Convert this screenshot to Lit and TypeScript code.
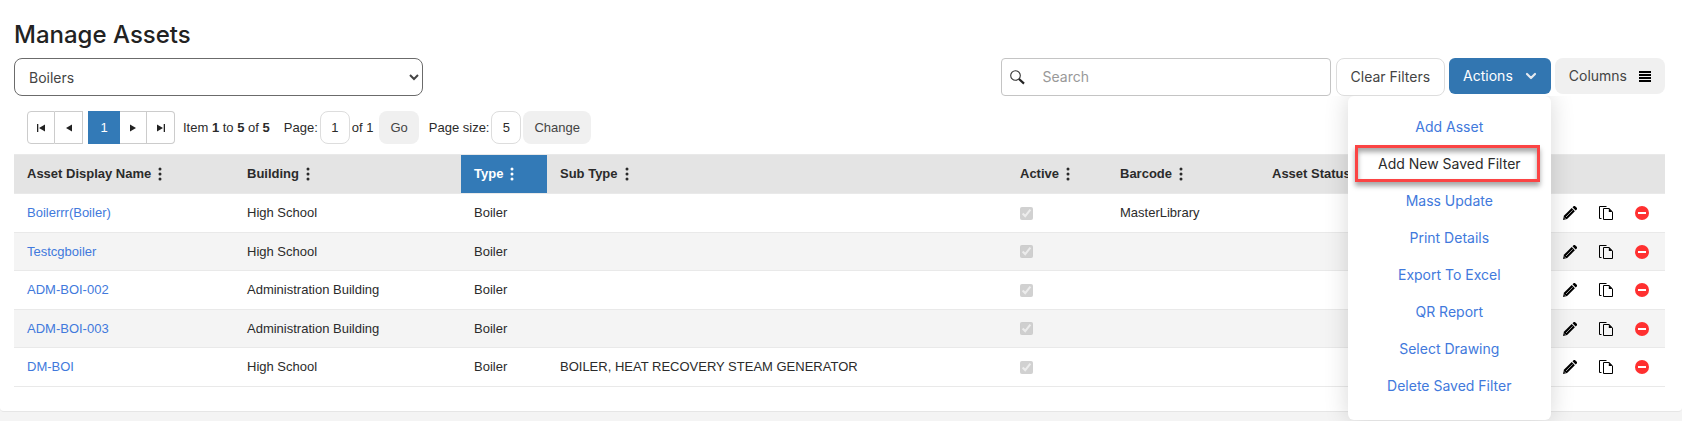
import { LitElement, html, css, svg, nothing } from "lit";
import { customElement, property, state } from "lit/decorators.js";
import { classMap } from "lit/directives/class-map.js";

interface Asset {
  name: string;
  building: string;
  type: string;
  subType?: string;
  active: boolean;
  barcode?: string;
}

const ASSETS: Asset[] = [
  { name: "Boilerrr(Boiler)", building: "High School", type: "Boiler", active: true, barcode: "MasterLibrary" },
  { name: "Testcgboiler", building: "High School", type: "Boiler", active: true },
  { name: "ADM-BOI-002", building: "Administration Building", type: "Boiler", active: true },
  { name: "ADM-BOI-003", building: "Administration Building", type: "Boiler", active: true },
  { name: "DM-BOI", building: "High School", type: "Boiler", subType: "BOILER, HEAT RECOVERY STEAM GENERATOR", active: true },
];

const COLUMNS = [
  { key: "name", label: "Asset Display Name" },
  { key: "building", label: "Building" },
  { key: "type", label: "Type" },
  { key: "subtype", label: "Sub Type" },
  { key: "active", label: "Active" },
  { key: "barcode", label: "Barcode" },
  { key: "status", label: "Asset Status" },
];

const MENU = [
  "Add Asset",
  "Add New Saved Filter",
  "Mass Update",
  "Print Details",
  "Export To Excel",
  "QR Report",
  "Select Drawing",
  "Delete Saved Filter",
];

const GLYPHS: Record<string, { w: number; h: number; body: unknown }> = {
  search: {
    w: 15, h: 15,
    body: svg`<circle cx="5.5" cy="5.5" r="4.8" fill="none" stroke="#333" stroke-width="1.1"/>
      <path d="M9 9l5 4.6" stroke="#222" stroke-width="2.2" fill="none"/>`,
  },
  chevron: {
    w: 12, h: 8,
    body: svg`<path d="M2 2l4 4 4-4" fill="none" stroke="#e4e9ef" stroke-width="2.2" stroke-linecap="round" stroke-linejoin="round"/>`,
  },
  bars: {
    w: 12, h: 11,
    body: svg`<path d="M0 0h12v2H0zM0 3h12v2H0zM0 6h12v2H0zM0 9h12v2H0z" fill="#000"/>`,
  },
  kebab: {
    w: 4, h: 14,
    body: svg`<circle cx="2" cy="2" r="1.5"/><circle cx="2" cy="7" r="1.5"/><circle cx="2" cy="12" r="1.5"/>`,
  },
  first: { w: 8, h: 8, body: svg`<path d="M0 0h1.3v8H0zM8 .5v7L2 4z" fill="#222"/>` },
  prev: { w: 8, h: 8, body: svg`<path d="M7 .5v7L1 4z" fill="#222"/>` },
  next: { w: 8, h: 8, body: svg`<path d="M1 .5v7L7 4z" fill="#222"/>` },
  last: { w: 8, h: 8, body: svg`<path d="M6.7 0H8v8H6.7zM0 .5v7L6 4z" fill="#222"/>` },
  pencil: {
    w: 14, h: 14,
    body: svg`<path d="M0 14l.9-4.2L8.7 2l3.2 3.2-7.8 7.9z" fill="#000"/>
      <path d="M9.5 1.3L10.8 0h1.1L14 2.1v1.1l-1.3 1.3z" fill="#000"/>
      <path d="M3 11l6.6-6.7" stroke="#b5b5b5" stroke-width=".9"/>
      <path d="M1.3 11.6l1.2 1.2" stroke="#fff" stroke-width=".7"/>`,
  },
  copy: {
    w: 14, h: 14,
    body: svg`<path d="M7.5.5H.5v12h2" fill="none" stroke="#000" stroke-width="1"/>
      <path d="M4.5 2.5h5.6l3.4 3.4v7.6h-9z" fill="none" stroke="#000" stroke-width="1"/>
      <path d="M9.8 2.3v3.8h3.8z" fill="#000"/>`,
  },
  remove: {
    w: 14, h: 14,
    body: svg`<circle cx="7" cy="7" r="7" fill="#ff3030"/><path d="M3 6h8v2H3z" fill="#fff"/>`,
  },
};

const glyph = (name: string) => {
  const g = GLYPHS[name];
  return html`<svg class="glyph" width=${g.w} height=${g.h} viewBox="0 0 ${g.w} ${g.h}" aria-hidden="true">${g.body}</svg>`;
};

const shared = css`
  * { box-sizing: border-box; }
  button, input, select { font: inherit; color: inherit; margin: 0; }
  button { cursor: pointer; padding: 0; border: 0; background: none; }
  .glyph { display: block; flex: none; fill: currentColor; }
`;

@customElement("actions-menu")
export class ActionsMenu extends LitElement {
  @state() private open = true;

  static styles = [
    shared,
    css`
      :host { display: block; position: relative; }
      .trigger {
        display: flex; align-items: center; gap: 12px;
        height: 36px; padding: 0 14px; border-radius: 6px;
        background: #3276b1; color: #fff;
      }
      .menu {
        position: absolute; top: 38px; right: 0; z-index: 2;
        width: 203px; margin: 0; padding: 12px 0 16px; list-style: none;
        background: #fff; border-radius: 6px;
        box-shadow: 0 0 24px rgba(0, 0, 0, 0.16);
        clip-path: inset(0 -40px -40px -40px round 6px);
      }
      .item {
        position: relative; display: block; line-height: 37px;
        text-align: center; color: #4179dc; text-decoration: none; white-space: nowrap;
      }
      .current { color: #2b2b2b; }
      .current::after {
        content: ""; position: absolute; inset: 0 11px 0 7px;
        border: 3px solid #fb4444;
        box-shadow: 0 4px 5px rgba(0, 0, 0, 0.35), inset 0 4px 5px rgba(0, 0, 0, 0.35);
      }
    `,
  ];

  render() {
    return html`
      <button class="trigger" aria-expanded=${this.open} @click=${() => (this.open = !this.open)}>
        Actions ${glyph("chevron")}
      </button>
      ${this.open
        ? html`<ul class="menu">
            ${MENU.map(
              (label, i) => html`<li>
                <a href="#" class=${classMap({ item: true, current: i === 1 })}>${label}</a>
              </li>`
            )}
          </ul>`
        : nothing}
    `;
  }
}

@customElement("grid-pager")
export class GridPager extends LitElement {
  @property({ type: Number }) total = 5;

  static styles = [
    shared,
    css`
      :host { display: flex; align-items: center; height: 33px; padding-left: 13px; line-height: 17px; white-space: nowrap; }
      .group { display: flex; height: 33px; }
      .step {
        display: flex; align-items: center; justify-content: center;
        width: 28px; border: 1px solid #ccc; background: #fff;
      }
      .step + .step { border-left: 0; }
      .start { border-radius: 4px 0 0 4px; }
      .end { border-radius: 0 4px 4px 0; }
      .page { width: 32px; margin-left: 5px; background: #337ab7; color: #fff; }
      .page + .step { width: 27px; border-left: 0; }
      .info { margin: 0 14px 0 8px; }
      .info b { font-weight: 700; }
      .box {
        width: 30px; height: 33px; margin: 0 2px; padding: 0;
        border: 1px solid #ddd; border-radius: 8px; text-align: center; background: #fff;
      }
      .btn { height: 33px; padding: 0 11px; border-radius: 8px; background: #f0f0f0; color: #444; }
      .go { margin: 0 10px 0 6px; }
    `,
  ];

  render() {
    return html`
      <div class="group">
        <button class="step start" aria-label="First page">${glyph("first")}</button>
        <button class="step" aria-label="Previous page">${glyph("prev")}</button>
        <button class="page" aria-current="page">1</button>
        <button class="step" aria-label="Next page">${glyph("next")}</button>
        <button class="step end" aria-label="Last page">${glyph("last")}</button>
      </div>
      <span class="info">Item <b>1</b> to <b>${this.total}</b> of <b>${this.total}</b></span>
      <label for="page">Page:</label>
      <input class="box" id="page" value="1" />
      <span>of 1</span>
      <button class="btn go">Go</button>
      <label for="size">Page size:</label>
      <input class="box" id="size" value="5" />
      <button class="btn">Change</button>
    `;
  }
}

@customElement("asset-table")
export class AssetTable extends LitElement {
  @property({ attribute: false }) rows: Asset[] = [];

  static styles = [
    shared,
    css`
      :host { display: block; }
      table { width: 100%; table-layout: fixed; border-collapse: separate; border-spacing: 0; }
      th, td { padding: 0 0 0 13px; text-align: left; white-space: nowrap; overflow: hidden; border-bottom: 1px solid #e9e9e9; }
      th { height: 40px; background: #e4e4e4; border-top: 1px solid #e9e9e9; }
      td { height: 39px; }
      .even td { height: 38px; background: #f4f4f4; }
      .name { width: 220px; }
      .building { width: 227px; }
      .type { width: 86px; }
      .active { width: 100px; }
      .barcode { width: 152px; }
      .status { width: 292px; }
      .tool { width: 36px; }
      .tool-end { width: 42px; }
      .head { display: flex; align-items: center; gap: 7px; }
      .sorted { background: #337ab7; color: #fff; }
      .link { color: #4179dc; text-decoration: none; }
      .tick { display: block; width: 13px; height: 13px; }
      .icon { padding-left: 12px; }
      .icon button { display: block; }
    `,
  ];

  render() {
    return html`
      <table>
        <thead>
          <tr>
            ${COLUMNS.map(
              (c) => html`<th scope="col" class=${classMap({ [c.key]: true, sorted: c.key === "type" })}>
                <span class="head">${c.label}<button aria-label="${c.label} options">${glyph("kebab")}</button></span>
              </th>`
            )}
            <th class="tool"></th>
            <th class="tool"></th>
            <th class="tool-end"></th>
          </tr>
        </thead>
        <tbody>
          ${this.rows.map(
            (r, i) => html`<tr class=${classMap({ even: i % 2 === 1 })}>
              <td><a class="link" href="#">${r.name}</a></td>
              <td>${r.building}</td>
              <td>${r.type}</td>
              <td>${r.subType ?? nothing}</td>
              <td><input class="tick" type="checkbox" aria-label="Active" .checked=${r.active} disabled /></td>
              <td>${r.barcode ?? nothing}</td>
              <td></td>
              <td class="icon"><button aria-label="Edit">${glyph("pencil")}</button></td>
              <td class="icon"><button aria-label="Copy">${glyph("copy")}</button></td>
              <td class="icon"><button aria-label="Delete">${glyph("remove")}</button></td>
            </tr>`
          )}
        </tbody>
      </table>
    `;
  }
}

@customElement("app-root")
export class AppRoot extends LitElement {
  static styles = [
    shared,
    css`
      :host {
        display: block; min-height: 100vh; background: #f4f4f4; color: #2b2b2b;
        font: 13px/18px "Liberation Sans", Arial, sans-serif;
      }
      .card {
        padding: 21px 17px 24px 14px; background: #fff;
        border-bottom: 1px solid #e6e6e6; border-radius: 0 0 4px 4px;
      }
      h1 { margin: 0 0 9px; font: 500 24px/28px Inter, sans-serif; color: #222; }
      .toolbar {
        display: flex; align-items: flex-start; gap: 4px;
        font: 14px/18px Inter, sans-serif; color: #444;
      }
      .saved {
        width: 409px; height: 38px; padding: 0 0 0 10px; margin-right: auto;
        border: 1px solid #6b6b6b; border-radius: 8px; background: #fff;
      }
      .search {
        display: flex; align-items: center; gap: 18px;
        width: 330px; height: 38px; padding: 0 8px; margin-right: 1px;
        border: 1px solid #c4c4c4; border-radius: 4px; background: #fff;
      }
      .search input { flex: 1; min-width: 0; padding: 0; border: 0; outline: 0; background: none; }
      .search input::placeholder { color: #999; opacity: 1; }
      .clear { height: 38px; padding: 0 14px; border: 1px solid #ddd; border-radius: 8px; background: #fff; }
      .columns {
        display: flex; align-items: center; gap: 12px;
        height: 36px; padding: 0 14px; border-radius: 8px; background: #f0f0f0;
      }
      .columns .glyph { color: #000; }
      grid-pager { margin: 15px 0 10px; }
    `,
  ];

  render() {
    return html`
      <main class="card">
        <h1>Manage Assets</h1>
        <div class="toolbar">
          <select class="saved" aria-label="Saved filter">
            <option>Boilers</option>
          </select>
          <label class="search">
            ${glyph("search")}
            <input type="text" placeholder="Search" aria-label="Search" />
          </label>
          <button class="clear">Clear Filters</button>
          <actions-menu></actions-menu>
          <button class="columns">Columns ${glyph("bars")}</button>
        </div>
        <grid-pager .total=${ASSETS.length}></grid-pager>
        <asset-table .rows=${ASSETS}></asset-table>
      </main>
    `;
  }
}
